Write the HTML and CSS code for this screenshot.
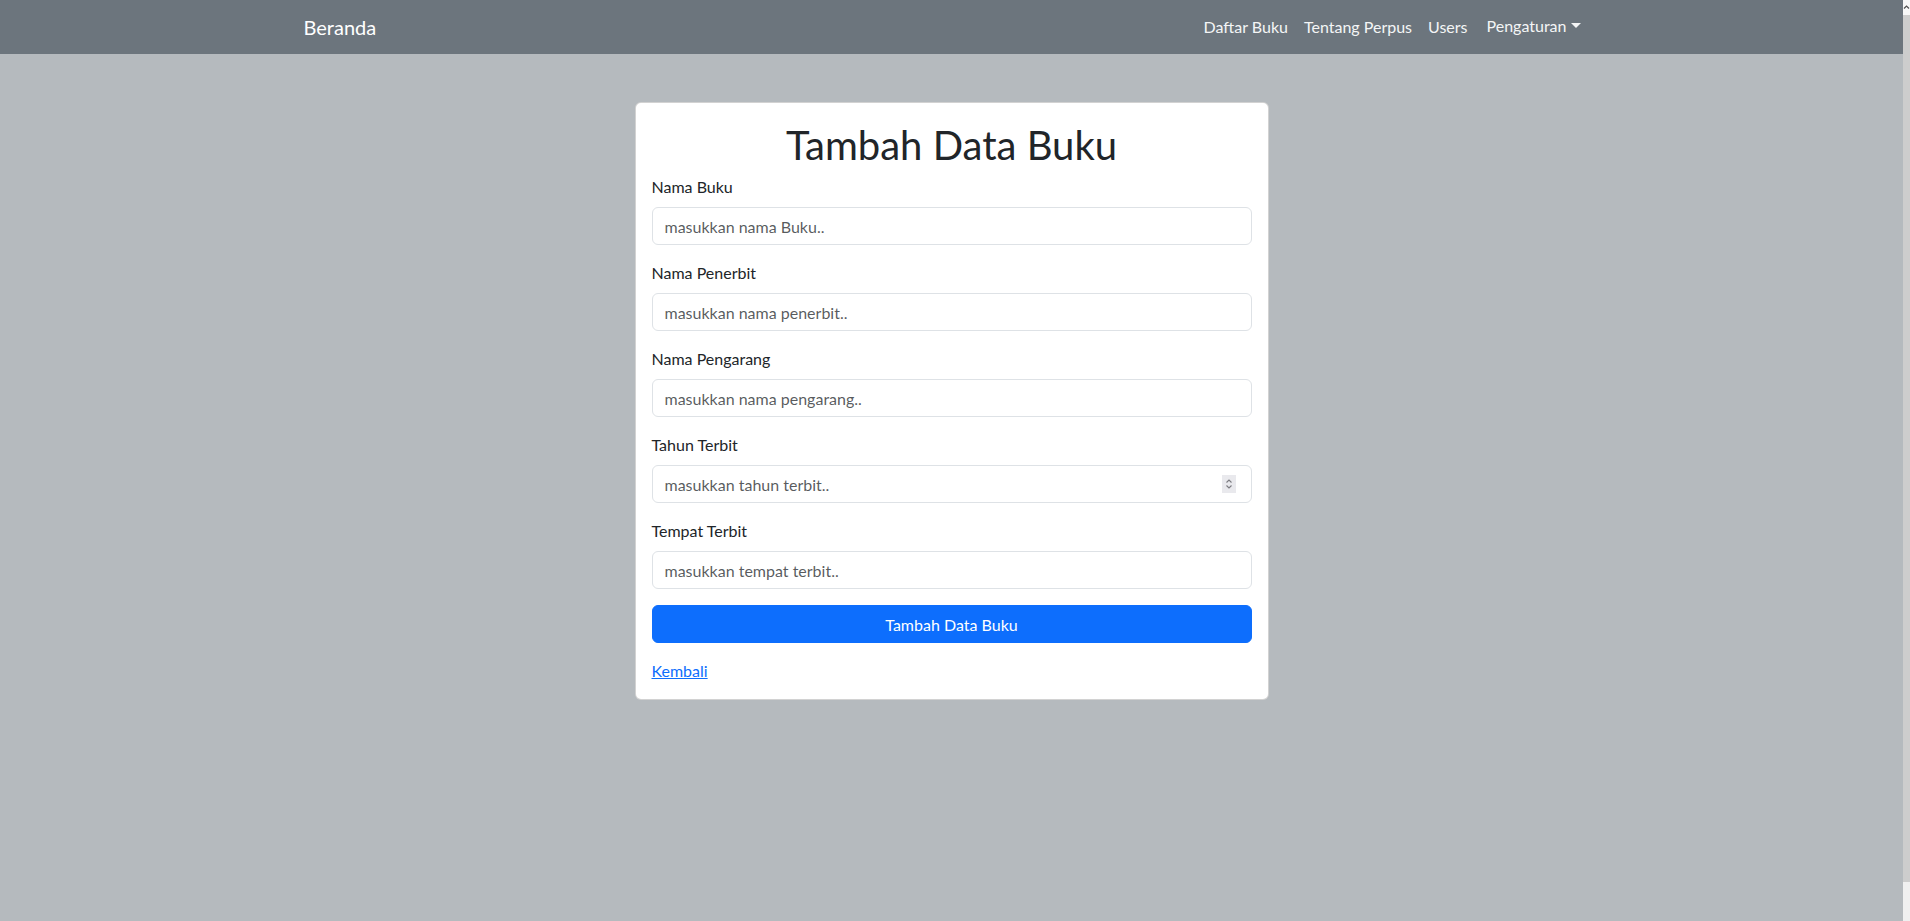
FILE: index.html
```html
<!DOCTYPE html>
<html lang="id">
<head>
<meta charset="utf-8">
<title>Tambah Data Buku</title>
<link rel="stylesheet" href="styles.css">
</head>
<body>
<nav class="navbar">
  <div class="nav-container">
    <a class="brand" href="#">Beranda</a>
    <ul class="nav-links">
      <li><a href="#">Daftar Buku</a></li>
      <li><a href="#">Tentang Perpus</a></li>
      <li><a href="#">Users</a></li>
      <li class="dropdown"><a href="#" class="dropdown-toggle">Pengaturan</a></li>
    </ul>
  </div>
</nav>
<main class="page">
  <div class="card">
    <div class="card-body">
      <h1 class="title">Tambah Data Buku</h1>
      <form class="form">
        <div class="group">
          <label class="label" for="nama">Nama Buku</label>
          <input class="control" id="nama" type="text" placeholder="masukkan nama Buku..">
        </div>
        <div class="group">
          <label class="label" for="penerbit">Nama Penerbit</label>
          <input class="control" id="penerbit" type="text" placeholder="masukkan nama penerbit..">
        </div>
        <div class="group">
          <label class="label" for="pengarang">Nama Pengarang</label>
          <input class="control" id="pengarang" type="text" placeholder="masukkan nama pengarang..">
        </div>
        <div class="group">
          <label class="label" for="tahun">Tahun Terbit</label>
          <div class="number-wrap">
            <input class="control" id="tahun" type="number" placeholder="masukkan tahun terbit..">
            <span class="spinner" aria-hidden="true">
              <svg width="14" height="18" viewBox="0 0 14 18"><path d="M4.5 7.5 7 5l2.5 2.5M4.5 10.5 7 13l2.5-2.5" fill="none" stroke="#7b7b80" stroke-width="1.1"/></svg>
            </span>
          </div>
        </div>
        <div class="group">
          <label class="label" for="tempat">Tempat Terbit</label>
          <input class="control" id="tempat" type="text" placeholder="masukkan tempat terbit..">
        </div>
        <button class="btn-primary" type="button">Tambah Data Buku</button>
      </form>
      <a class="back" href="#">Kembali</a>
    </div>
  </div>
</main>
<div class="scrollbar" aria-hidden="true">
  <div class="scroll-btn">
    <svg width="7" height="15" viewBox="0 0 7 15"><path d="M1 8.5 3.5 6 6 8.5" fill="none" stroke="#505050" stroke-width="1.2"/></svg>
  </div>
  <div class="scroll-thumb"></div>
</div>
</body>
</html>
```
FILE: styles.css
```css
* {
  box-sizing: border-box;
}
body {
  margin: 0;
  padding-right: 7px;
  font-family: "Lato", "Noto Sans", sans-serif;
  font-size: 16px;
  line-height: 1.5;
  color: #212529;
  background: #b5babe;
}
.navbar {
  background: #6c757d;
  height: 54px;
}
.nav-container {
  max-width: 1320px;
  height: 100%;
  margin: 0 auto;
  padding: 0 12px;
  display: flex;
  align-items: center;
  justify-content: space-between;
}
.brand {
  color: #fff;
  font-size: 20px;
  text-decoration: none;
  line-height: 30px;
}
.nav-links {
  list-style: none;
  margin: 0 11px 0 0;
  padding: 0;
  display: flex;
  align-items: center;
}
.nav-links a {
  display: block;
  color: #f4f5f6;
  text-decoration: none;
  padding: 9px 8px;
  line-height: 24px;
}
.dropdown {
  margin-left: 3px;
  position: relative;
  top: -1px;
}
.dropdown-toggle::after {
  content: "";
  display: inline-block;
  margin-left: 4px;
  vertical-align: 4px;
  border-top: 5px solid #f4f5f6;
  border-left: 5px solid transparent;
  border-right: 5px solid transparent;
}
.page {
  min-height: calc(100vh - 54px);
  padding-top: 48px;
}
.card {
  width: 634px;
  margin: 0 auto;
  background: #fff;
  border: 1px solid rgba(0, 0, 0, 0.175);
  border-radius: 6px;
}
.card-body {
  padding: 16px;
}
.title {
  margin: 2px 0 6px;
  font-size: 40px;
  font-weight: 400;
  line-height: 1.2;
  text-align: center;
}
.form {
  margin: 0;
}
.group {
  margin-bottom: 16px;
}
.label {
  display: block;
  margin-bottom: 8px;
}
.control {
  display: block;
  width: 100%;
  height: 38px;
  padding: 6px 12px;
  font-family: inherit;
  font-size: 16px;
  line-height: 1.5;
  color: #212529;
  background: #fff;
  border: 1px solid #dee2e6;
  border-radius: 6px;
  outline: none;
}
.control::placeholder {
  color: rgba(33, 37, 41, 0.75);
}
.control::-webkit-inner-spin-button,
.control::-webkit-outer-spin-button {
  -webkit-appearance: none;
  margin: 0;
}
.number-wrap {
  position: relative;
}
.spinner {
  position: absolute;
  right: 16px;
  top: 10px;
  width: 14px;
  height: 18px;
  background: #e9e9ed;
  display: flex;
}
.btn-primary {
  display: block;
  width: 100%;
  height: 38px;
  margin-bottom: 16px;
  font-family: inherit;
  font-size: 16px;
  color: #fff;
  background: #0d6efd;
  border: 1px solid #0d6efd;
  border-radius: 6px;
}
.back {
  color: #0d6efd;
  text-decoration: underline;
}
.scrollbar {
  position: fixed;
  top: 0;
  right: 0;
  width: 7px;
  height: 100vh;
  background: #f0f0f0;
  display: flex;
  flex-direction: column;
}
.scroll-btn {
  height: 15px;
  background: #f7f7f7;
  display: flex;
}
.scroll-thumb {
  height: 867px;
  background: #cdcdcd;
}
```
